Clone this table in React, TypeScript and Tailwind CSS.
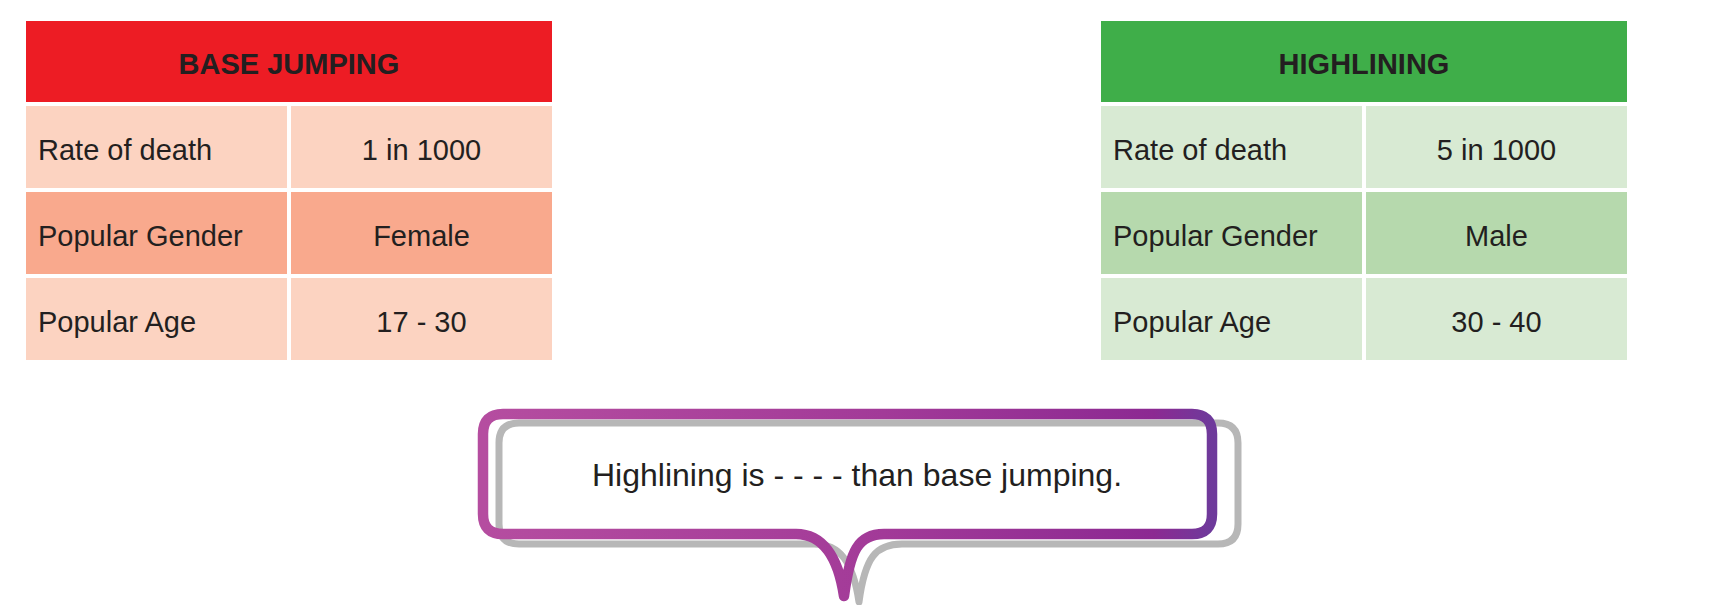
import React from "react";

type Row = { label: string; value: string; dark?: boolean };

function bubblePath(L: number, R: number, T: number, B: number, r: number, x1: number, tipX: number, tipY: number, x2: number) {
  return [
    `M ${L + r} ${T}`,
    `H ${R - r}`,
    `Q ${R} ${T} ${R} ${T + r}`,
    `V ${B - r}`,
    `Q ${R} ${B} ${R - r} ${B}`,
    `H ${x2}`,
    `C ${x2 - 26} ${B} ${tipX + 6} ${tipY - 45} ${tipX} ${tipY}`,
    `C ${tipX - 6} ${tipY - 40} ${x1 + 26} ${B} ${x1} ${B}`,
    `H ${L + r}`,
    `Q ${L} ${B} ${L} ${B - r}`,
    `V ${T + r}`,
    `Q ${L} ${T} ${L + r} ${T}`,
    "Z",
  ].join(" ");
}

function DataTable({
  title,
  headerBg,
  lightBg,
  darkBg,
  rows,
}: {
  title: string;
  headerBg: string;
  lightBg: string;
  darkBg: string;
  rows: Row[];
}) {
  return (
    <div className="w-[526px] flex flex-col gap-[4px]">
      <div className={`h-[81px] pt-[5px] flex items-center justify-center ${headerBg}`}>
        <span className="text-[29px] font-bold text-[#231f20] leading-none">{title}</span>
      </div>
      {rows.map((r) => (
        <div key={r.label} className="grid grid-cols-2 gap-[4px] h-[82px]">
          <div className={`flex items-center pl-[12px] pt-[6px] ${r.dark ? darkBg : lightBg}`}>
            <span className="text-[29px] text-[#231f20] leading-none">{r.label}</span>
          </div>
          <div className={`flex items-center justify-center pt-[6px] ${r.dark ? darkBg : lightBg}`}>
            <span className="text-[29px] text-[#231f20] leading-none">{r.value}</span>
          </div>
        </div>
      ))}
    </div>
  );
}

export default function App() {
  const purple = bubblePath(13, 742, 14, 134, 20, 326, 374, 196, 414);
  const gray = bubblePath(29, 768, 23, 144, 20, 344, 389, 202, 432);
  return (
    <div
      className="w-[1719px] h-[612px] bg-white overflow-hidden"
      style={{ fontFamily: '"Liberation Sans", Arial, sans-serif' }}
    >
      <div className="flex gap-[549px] pl-[26px] pt-[21px]">
        <DataTable
          title="BASE JUMPING"
          headerBg="bg-[#ed1c24]"
          lightBg="bg-[#fcd3c1]"
          darkBg="bg-[#f9a98d]"
          rows={[
            { label: "Rate of death", value: "1 in 1000" },
            { label: "Popular Gender", value: "Female", dark: true },
            { label: "Popular Age", value: "17 - 30" },
          ]}
        />
        <DataTable
          title="HIGHLINING"
          headerBg="bg-[#3fae49]"
          lightBg="bg-[#d8ead3]"
          darkBg="bg-[#b6d9ad]"
          rows={[
            { label: "Rate of death", value: "5 in 1000" },
            { label: "Popular Gender", value: "Male", dark: true },
            { label: "Popular Age", value: "30 - 40" },
          ]}
        />
      </div>
      <div className="relative ml-[470px] mt-[40px] w-[790px] h-[205px]">
        <svg
          className="absolute inset-0"
          width="790"
          height="205"
          viewBox="0 0 790 205"
          fill="none"
        >
          <defs>
            <linearGradient id="pg" x1="0" y1="0" x2="1" y2="0">
              <stop offset="0" stopColor="#b54da0" />
              <stop offset="0.55" stopColor="#a23a98" />
              <stop offset="0.92" stopColor="#8c2992" />
              <stop offset="1" stopColor="#6e3a9b" />
            </linearGradient>
          </defs>
          <path d={gray} stroke="#b7b7b7" strokeWidth="7" strokeLinejoin="round" />
          <path d={purple} stroke="url(#pg)" strokeWidth="10.5" strokeLinejoin="round" />
        </svg>
        <div className="relative pl-[122px] pt-[57px]">
          <span className="text-[32px] leading-[36px] text-[#231f20]">
            Highlining is - - - - than base jumping.
          </span>
        </div>
      </div>
    </div>
  );
}
